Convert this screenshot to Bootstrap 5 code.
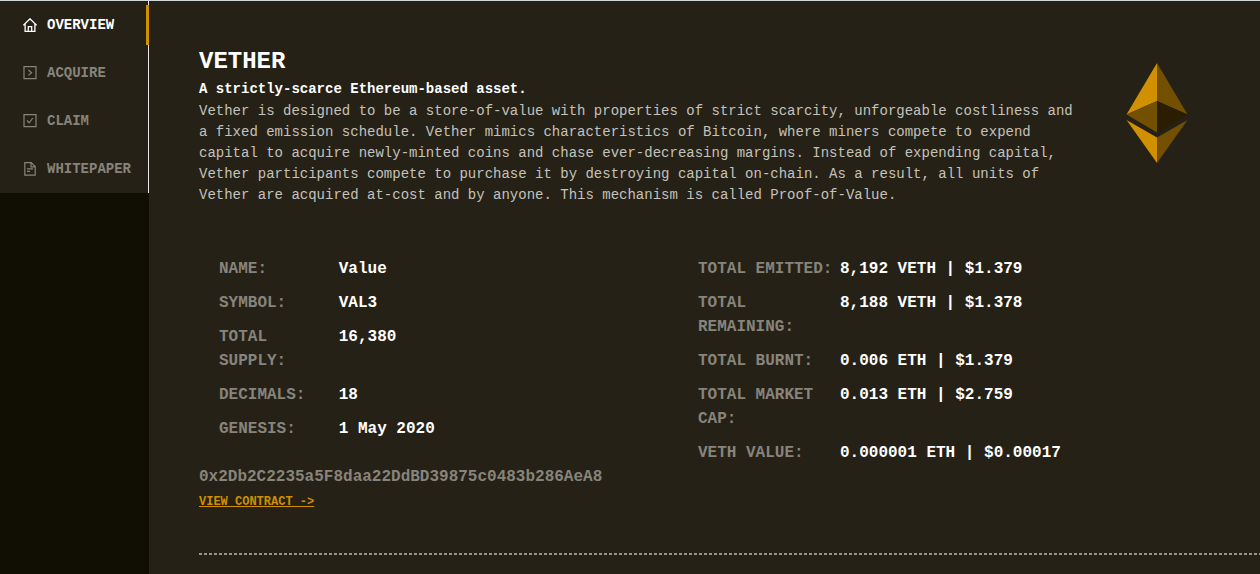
<!DOCTYPE html>
<html lang="en">
<head>
<meta charset="utf-8">
<meta name="viewport" content="width=device-width, initial-scale=1">
<title>Vether</title>
<link href="https://cdn.jsdelivr.net/npm/bootstrap@5.3.0/dist/css/bootstrap.min.css" rel="stylesheet">
<style>
  :root { --ink: #252117; --gold: #d09000; --dim: #87847b; --soft: #c4c2bb; }
  body { background: var(--ink); color: #fff; font: 14px/21px "Courier New", "Liberation Mono", monospace; }
  .app-shell { border-top: 1px solid #d3d7da; }
  .side-bar { width: 149px; background: #110e03; }
  .side-menu { background: var(--ink); border-right: 1px solid #e8e8e8; }
  .side-menu .nav-link { height: 40px; padding: 0 0 0 23px; gap: 10px; color: var(--dim); font-weight: 700; }
  .side-menu .nav-link:hover { color: #fff; }
  .side-menu .nav-link.active { color: #fff; border-right: 3px solid var(--gold); margin-right: -1px; }
  .side-menu svg { width: 14px; height: 14px; fill: none; stroke: currentColor; }
  .page-main { padding: 45px 0 20px 50px; min-width: 0; }
  h1 { font-size: 24px; line-height: 32px; font-weight: 700; padding-bottom: 1px; }
  .intro { color: var(--soft); padding-top: 1px; }
  .logo-cell { padding-right: 30px; }
  .stats-row { padding: 51px 83px 0 20px; }
  .stat-list { font-size: 16px; line-height: 24px; font-weight: 700; row-gap: 10px; }
  .stat-list dt { color: var(--dim); }
  .stat-list dd { margin: 0; font-weight: 700; }
  .token-stats { grid-template-columns: 25% 1fr; }
  .supply-stats { grid-template-columns: 142px 1fr; }
  .contract-id { font-size: 16px; line-height: 24px; color: var(--dim); }
  .contract-link { font-size: 12px; line-height: 26px; color: var(--gold); }
  .contract-link:hover { color: #fff; }
  .dash-rule { height: 2px; margin: 38px 0 0; border: 0; opacity: 1; background: repeating-linear-gradient(90deg, #97948a 0 3px, transparent 3px 5px); }
</style>
</head>
<body>
<div class="app-shell d-flex min-vh-100">
  <aside class="side-bar flex-shrink-0">
    <nav class="side-menu nav flex-column flex-nowrap gap-2 py-1" aria-label="Main">
      <a class="nav-link active d-flex align-items-center" aria-current="page" href="#overview">
        <svg viewBox="0 0 14 14" stroke-width="1.3" aria-hidden="true"><path d="M.4 7.300 7 .8l6.600 6.500M2.100 6v7.300h9.800V6M5.300 13V8.600h3.400V13"/></svg>OVERVIEW</a>
      <a class="nav-link d-flex align-items-center" href="#acquire">
        <svg viewBox="0 0 14 14" stroke-width="1.2" aria-hidden="true"><path d="M1 .7h12v12H1zM5.400 4 8.600 6.700 5.400 9.400"/></svg>ACQUIRE</a>
      <a class="nav-link d-flex align-items-center" href="#claim">
        <svg viewBox="0 0 14 14" stroke-width="1.2" aria-hidden="true"><path d="M1 .7h12v12H1zM4 6.500 6.200 8.900 9.800 4"/></svg>CLAIM</a>
      <a class="nav-link d-flex align-items-center" href="#whitepaper">
        <svg viewBox="0 0 14 14" stroke-width="1.2" aria-hidden="true"><path d="M1.800.6h6.400l4 4v8.600H1.800zM8 .8v4h4M4 6.900h6M4 9.300h3"/></svg>WHITEPAPER</a>
    </nav>
  </aside>
  <main class="page-main flex-grow-1" id="overview">
    <div class="row g-0">
      <div class="col-10">
        <h1 class="mb-0">VETHER</h1>
        <p class="fw-bold mb-0">A strictly-scarce Ethereum-based asset.</p>
        <p class="intro mb-0">Vether is designed to be a store-of-value with properties of strict scarcity, unforgeable costliness and a fixed emission schedule. Vether mimics characteristics of Bitcoin, where miners compete to expend capital to acquire newly-minted coins and chase ever-decreasing margins. Instead of expending capital, Vether participants compete to purchase it by destroying capital on-chain. As a result, all units of Vether are acquired at-cost and by anyone. This mechanism is called Proof-of-Value.</p>
      </div>
      <div class="col-2 logo-cell text-center">
        <svg class="mt-3" width="62" height="102" viewBox="0 0 62 102" role="img" aria-label="Ethereum">
          <path fill="#d09000" d="M31 1v38L.5 52.500z"/>
          <path fill="#735000" d="M31 1v38l30.500 13.500z"/>
          <path fill="#735000" d="M31 39v31.500L.5 52.500z"/>
          <path fill="#2b1e00" d="M31 39v31.500l30.500-18z"/>
          <path fill="#d09000" d="M.5 58 31 75.500V101z"/>
          <path fill="#735000" d="M61.500 58 31 75.500V101z"/>
        </svg>
      </div>
    </div>
    <div class="row g-0 stats-row">
      <div class="col-6">
        <dl class="stat-list token-stats d-grid mb-0">
          <dt>NAME:</dt><dd>Value</dd>
          <dt>SYMBOL:</dt><dd>VAL3</dd>
          <dt>TOTAL SUPPLY:</dt><dd>16,380</dd>
          <dt>DECIMALS:</dt><dd>18</dd>
          <dt>GENESIS:</dt><dd>1 May 2020</dd>
        </dl>
      </div>
      <div class="col-6">
        <dl class="stat-list supply-stats d-grid mb-0">
          <dt>TOTAL EMITTED:</dt><dd>8,192 VETH | $1.379</dd>
          <dt>TOTAL REMAINING:</dt><dd>8,188 VETH | $1.378</dd>
          <dt>TOTAL BURNT:</dt><dd>0.006 ETH | $1.379</dd>
          <dt>TOTAL MARKET CAP:</dt><dd>0.013 ETH | $2.759</dd>
          <dt>VETH VALUE:</dt><dd>0.000001 ETH | $0.00017</dd>
        </dl>
      </div>
    </div>
    <div class="contract-id fw-bold">0x2Db2C2235a5F8daa22DdBD39875c0483b286AeA8</div>
    <a class="contract-link d-inline-block fw-bold" href="#contract">VIEW CONTRACT -&gt;</a>
    <hr class="dash-rule">
  </main>
</div>
<script src="https://cdn.jsdelivr.net/npm/bootstrap@5.3.0/dist/js/bootstrap.bundle.min.js"></script>
</body>
</html>
